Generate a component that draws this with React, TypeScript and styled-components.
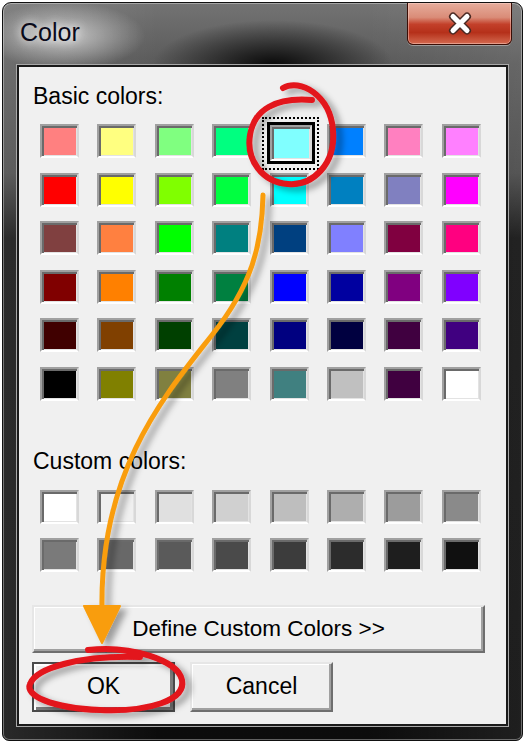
import React from 'react';
import styled, { createGlobalStyle, css } from 'styled-components';

const GlobalStyle = createGlobalStyle`
  html, body {
    margin: 0;
    padding: 0;
    background: #ffffff;
  }
  body {
    font-family: "Liberation Sans", Arial, sans-serif;
  }
`;

const basicColors = [
  '#FF8080', '#FFFF80', '#80FF80', '#00FF80', '#80FFFF', '#0080FF', '#FF80C0', '#FF80FF',
  '#FF0000', '#FFFF00', '#80FF00', '#00FF40', '#00FFFF', '#0080C0', '#8080C0', '#FF00FF',
  '#804040', '#FF8040', '#00FF00', '#008080', '#004080', '#8080FF', '#800040', '#FF0080',
  '#800000', '#FF8000', '#008000', '#008040', '#0000FF', '#0000A0', '#800080', '#8000FF',
  '#400000', '#804000', '#004000', '#004040', '#000080', '#000040', '#400040', '#400080',
  '#000000', '#808000', '#808040', '#808080', '#408080', '#C0C0C0', '#400040', '#FFFFFF',
];

const customColors = [
  '#FFFFFF', '#F0F0F0', '#E0E0E0', '#D0D0D0', '#BEBEBE', '#AEAEAE', '#9C9C9C', '#8A8A8A',
  '#7A7A7A', '#686868', '#5A5A5A', '#4A4A4A', '#3C3C3C', '#2C2C2C', '#1E1E1E', '#101010',
];

const Page = styled.div`
  position: relative;
  width: 525px;
  height: 743px;
  overflow: hidden;
`;

const Window = styled.div`
  box-sizing: border-box;
  margin: 2px 0 0 2px;
  width: 521px;
  height: 739px;
  border: 1px solid #111;
  border-radius: 9px 9px 7px 7px;
  display: flex;
  flex-direction: column;
  padding: 0 14px 14px 14px;
  box-shadow: inset 0 0 0 1px rgba(255, 255, 255, 0.35);
  background:
    radial-gradient(ellipse 80px 34px at 62px 33px, rgba(255, 255, 255, 0.6), rgba(255, 255, 255, 0) 100%),
    radial-gradient(ellipse 120px 45px at 270px 62px, rgba(0, 0, 0, 0.9), rgba(0, 0, 0, 0) 100%),
    linear-gradient(to right, rgba(255, 255, 255, 0.12), rgba(0, 0, 0, 0) 30%, rgba(0, 0, 0, 0) 70%, rgba(255, 255, 255, 0.08)),
    linear-gradient(#737373 0, #5a5a5a 60px, #474747 170px, #101010 235px, #0c0c0c 100%);
`;

const TitleBar = styled.div`
  height: 62px;
  display: flex;
  justify-content: space-between;
  align-items: flex-start;
`;

const Title = styled.span`
  margin: 15px 0 0 3px;
  font-size: 25px;
  line-height: 28px;
  color: #0a0a1a;
  text-shadow: 0 0 8px rgba(255, 255, 255, 0.9), 0 0 14px rgba(255, 255, 255, 0.6);
`;

const CloseButton = styled.div`
  box-sizing: border-box;
  width: 105px;
  height: 42px;
  margin-right: -4px;
  border: 1px solid #3a0e06;
  border-top: none;
  border-radius: 0 0 6px 6px;
  display: flex;
  align-items: center;
  justify-content: center;
  background: linear-gradient(#e6ad9c 0, #da8c78 35%, #c3402a 52%, #b5301a 72%, #d46a50 100%);
  box-shadow: inset 0 0 0 1px rgba(255, 220, 210, 0.45), 0 1px 0 rgba(255, 255, 255, 0.35);
`;

const Client = styled.div`
  flex: 1;
  background: #f0f0f0;
  border: 2px solid #1a1a1a;
  box-shadow: 0 0 0 1px #a8a8a8;
  padding: 15px 0 0 14px;
  display: flex;
  flex-direction: column;
  align-items: flex-start;
`;

const Label = styled.div<{ $top?: number }>`
  margin-top: ${p => p.$top ?? 0}px;
  font-size: 23px;
  line-height: 28px;
  color: #000;
`;

const SwatchGrid = styled.div<{ $top: number; $rowGap: number }>`
  margin: ${p => p.$top}px 0 0 7px;
  display: grid;
  grid-template-columns: repeat(8, 39px);
  grid-auto-rows: 34px;
  column-gap: 18.4px;
  row-gap: ${p => p.$rowGap}px;
`;

const Swatch = styled.div<{ $c: string; $selected?: boolean }>`
  box-sizing: border-box;
  width: 39px;
  height: 34px;
  background: ${p => p.$c};
  border: 2px solid;
  border-color: #a0a0a0 #d8d8d8 #ffffff #a0a0a0;
  box-shadow: inset 2px 2px 0 #6a6a6a, inset -1px -1px 0 #e3e3e3;
  ${p => p.$selected && css`
    position: relative;
    width: 42px;
    height: 36px;
    margin: 1px 0 0 0;
    box-shadow: inset 2px 2px 0 #6a6a6a, inset -1px -1px 0 #e3e3e3, 0 0 0 3px #000;
    &::after {
      content: '';
      position: absolute;
      top: -10px;
      left: -10px;
      right: -9px;
      bottom: -11px;
      border: 2px dotted #000;
    }
  `}
`;

const WideButton = styled.div`
  box-sizing: border-box;
  margin: 33px 0 0 -1px;
  width: 453px;
  height: 48px;
  display: flex;
  align-items: center;
  justify-content: center;
  font-size: 22.5px;
  color: #000;
  background: #f0f0f0;
  border: 2px solid;
  border-color: #e6e6e6 #6e6e6e #6e6e6e #e6e6e6;
  box-shadow: inset -2px -2px 0 #a0a0a0, inset 1px 1px 0 #ffffff;
`;

const ButtonRow = styled.div`
  margin: 9px 0 0 -1px;
  display: flex;
  gap: 15px;
`;

const Button = styled.div<{ $default?: boolean }>`
  box-sizing: border-box;
  width: 143px;
  height: 50px;
  display: flex;
  align-items: center;
  justify-content: center;
  font-size: 23px;
  color: #000;
  background: #f0f0f0;
  border: 2px solid;
  border-color: #e6e6e6 #6e6e6e #6e6e6e #e6e6e6;
  box-shadow: inset -2px -2px 0 #a0a0a0, inset 1px 1px 0 #ffffff;
  ${p => p.$default && css`
    border-color: #4a4a4a;
    box-shadow: inset 2px 2px 0 #ffffff, inset -3px -3px 0 #7a7a7a;
  `}
`;

const Annotations = styled.svg`
  position: absolute;
  left: 0;
  top: 0;
  pointer-events: none;
`;

const CloseGlyph = () => (
  <svg width="28" height="25" viewBox="0 0 28 25">
    <path d="M7 5.5 L21 19.5 M21 5.5 L7 19.5" stroke="#4a2a24" strokeWidth="8" strokeLinecap="round" />
    <path d="M7 5.5 L21 19.5 M21 5.5 L7 19.5" stroke="#ffffff" strokeWidth="5" strokeLinecap="round" />
  </svg>
);

export default function App() {
  return (
    <Page>
      <GlobalStyle />
      <Window>
        <TitleBar>
          <Title>Color</Title>
          <CloseButton>
            <CloseGlyph />
          </CloseButton>
        </TitleBar>
        <Client>
          <Label>Basic colors:</Label>
          <SwatchGrid $top={14} $rowGap={14.6}>
            {basicColors.map((c, i) => (
              <Swatch key={i} $c={c} $selected={i === 4} />
            ))}
          </SwatchGrid>
          <Label $top={46}>Custom colors:</Label>
          <SwatchGrid $top={15} $rowGap={14}>
            {customColors.map((c, i) => (
              <Swatch key={i} $c={c} />
            ))}
          </SwatchGrid>
          <WideButton>Define Custom Colors &gt;&gt;</WideButton>
          <ButtonRow>
            <Button $default>OK</Button>
            <Button>Cancel</Button>
          </ButtonRow>
        </Client>
      </Window>

      <Annotations width="525" height="743" viewBox="0 0 525 743">
        <defs>
          <filter id="shadow" x="-30%" y="-30%" width="160%" height="160%">
            <feDropShadow dx="6" dy="4" stdDeviation="3" floodColor="#000" floodOpacity="0.35" />
          </filter>
        </defs>
        <g filter="url(#shadow)" fill="none" strokeLinecap="round" strokeLinejoin="round">
          <path
            d="M263 195 C 262 245, 252 285, 212 335 C 165 395, 100 470, 102 608"
            stroke="#f99d0c"
            strokeWidth="5"
          />
          <path d="M84 606 L120 606 L102 643 Z" fill="#f99d0c" stroke="#f99d0c" strokeWidth="2" />
          <path
            d="M283 88 C 300 78, 330 95, 333 130 C 336 165, 312 186, 288 184 C 262 182, 246 160, 250 135 C 254 110, 275 97, 312 100"
            stroke="#e3141c"
            strokeWidth="6"
          />
          <path
            d="M88 650 C 130 645, 178 660, 182 680 C 186 700, 150 712, 100 710 C 50 708, 25 695, 30 684 C 36 668, 80 655, 140 657"
            stroke="#e3141c"
            strokeWidth="6"
          />
        </g>
      </Annotations>
    </Page>
  );
}
